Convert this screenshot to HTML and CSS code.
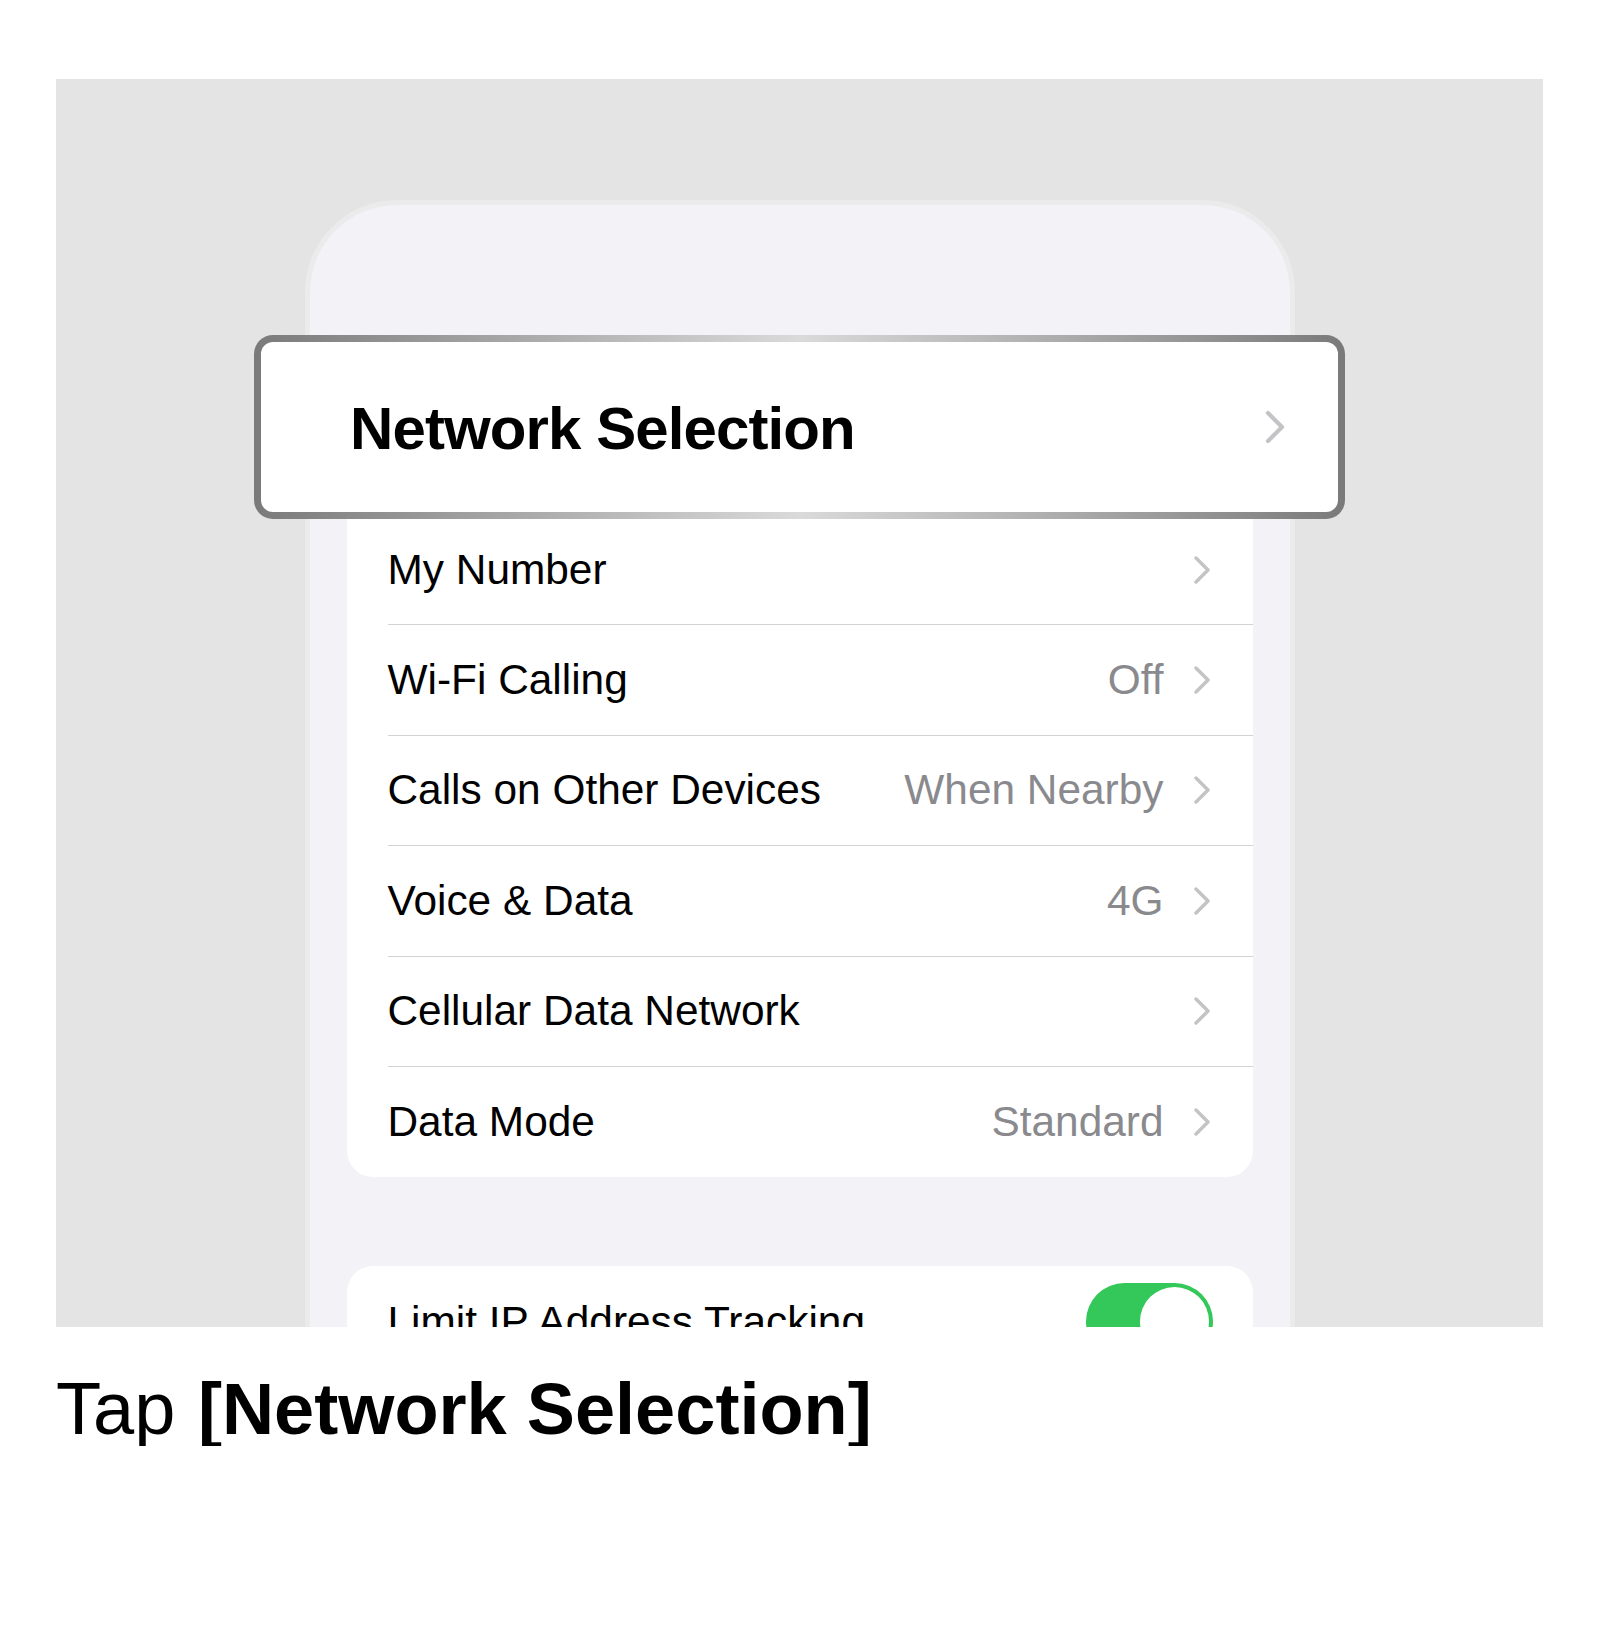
FILE: index.html
```html
<!DOCTYPE html>
<html lang="en">
    <head>
        <meta charset="UTF-8">
        <title>Tap Network Selection</title>
        <meta name="viewport" content="width=device-width, initial-scale=1.0"/>
        <link rel="stylesheet" href="styles.css">
    </head>

    <body>
        <div class="stage">
            <div class="phone">
                <div class="card card-first">
                    <div class="row">
                        <div class="row-inner">
                            <span class="label">My Number</span>
                            <span class="chevron"><svg width="16" height="28" viewBox="0 0 16 28"><path d="M2 2 L14 14 L2 26" fill="none" stroke="#c4c4c7" stroke-width="3.5" stroke-linecap="round" stroke-linejoin="round"/></svg></span>
                        </div>
                    </div>
                    <div class="row">
                        <div class="row-inner">
                            <span class="label">Wi-Fi Calling</span>
                            <span class="value">Off</span>
                            <span class="chevron"><svg width="16" height="28" viewBox="0 0 16 28"><path d="M2 2 L14 14 L2 26" fill="none" stroke="#c4c4c7" stroke-width="3.5" stroke-linecap="round" stroke-linejoin="round"/></svg></span>
                        </div>
                    </div>
                    <div class="row">
                        <div class="row-inner">
                            <span class="label">Calls on Other Devices</span>
                            <span class="value">When Nearby</span>
                            <span class="chevron"><svg width="16" height="28" viewBox="0 0 16 28"><path d="M2 2 L14 14 L2 26" fill="none" stroke="#c4c4c7" stroke-width="3.5" stroke-linecap="round" stroke-linejoin="round"/></svg></span>
                        </div>
                    </div>
                    <div class="row">
                        <div class="row-inner">
                            <span class="label">Voice &amp; Data</span>
                            <span class="value">4G</span>
                            <span class="chevron"><svg width="16" height="28" viewBox="0 0 16 28"><path d="M2 2 L14 14 L2 26" fill="none" stroke="#c4c4c7" stroke-width="3.5" stroke-linecap="round" stroke-linejoin="round"/></svg></span>
                        </div>
                    </div>
                    <div class="row">
                        <div class="row-inner">
                            <span class="label">Cellular Data Network</span>
                            <span class="chevron"><svg width="16" height="28" viewBox="0 0 16 28"><path d="M2 2 L14 14 L2 26" fill="none" stroke="#c4c4c7" stroke-width="3.5" stroke-linecap="round" stroke-linejoin="round"/></svg></span>
                        </div>
                    </div>
                    <div class="row last">
                        <div class="row-inner">
                            <span class="label">Data Mode</span>
                            <span class="value">Standard</span>
                            <span class="chevron"><svg width="16" height="28" viewBox="0 0 16 28"><path d="M2 2 L14 14 L2 26" fill="none" stroke="#c4c4c7" stroke-width="3.5" stroke-linecap="round" stroke-linejoin="round"/></svg></span>
                        </div>
                    </div>
                </div>

                <div class="card card-second">
                    <div class="row last">
                        <div class="row-inner">
                            <span class="label">Limit IP Address Tracking</span>
                            <span class="toggle"><span class="knob"></span></span>
                        </div>
                    </div>
                </div>
            </div>

            <!-- zoomed callout -->
            <div class="callout">
                <span class="callout-label">Network Selection</span>
                <svg width="20" height="34" viewBox="0 0 20 34"><path d="M3 3 L17 17 L3 31" fill="none" stroke="#c4c4c7" stroke-width="4.2" stroke-linecap="round" stroke-linejoin="round"/></svg>
            </div>
        </div>

        <p class="caption">Tap <b>[Network Selection]</b></p>
    </body>
</html>
```

FILE: styles.css
```css
body {
    margin: 0;
    background: #fff;
    font-family: "Liberation Sans", Arial, sans-serif;
    color: #000;
}

.stage {
    position: relative;
    margin: 79px 57px 0 56px;
    height: 1248px;
    background: #e4e4e4;
    overflow: hidden;
    display: flex;
    justify-content: center;
    padding-top: 121px;
    box-sizing: border-box;
}

.phone {
    width: 990px;
    box-sizing: border-box;
    border: 5px solid #ebebeb;
    border-bottom: none;
    border-radius: 92px 92px 0 0;
    background: #f2f2f7;
    padding: 275px 37px 0 37px;
    height: 1300px;
}

.card {
    background: #fff;
    border-radius: 26px;
}
.card-first {
    padding-top: 35px;
}
.card-second {
    margin-top: 89px;
}

.row {
    height: 110.4px;
    padding-left: 41px;
}
.row-inner {
    height: 100%;
    box-sizing: border-box;
    display: flex;
    align-items: center;
    padding-right: 43px;
    border-bottom: 1px solid #d1d1d6;
}
.row.last .row-inner {
    border-bottom: none;
}

.label {
    font-size: 42.4px;
    margin-right: auto;
}
.value {
    font-size: 42.4px;
    color: #8a8a8e;
    margin-right: 30px;
}
.chevron {
    display: flex;
}

.toggle {
    width: 127px;
    height: 77px;
    border-radius: 39px;
    background: #34c759;
    display: flex;
    justify-content: flex-end;
    align-items: center;
    padding: 4px;
    box-sizing: border-box;
    margin-right: -3px;
}
.knob {
    width: 69px;
    height: 69px;
    border-radius: 50%;
    background: #fff;
}

/*CALLOUT*/
.callout {
    position: absolute;
    left: 198px;
    top: 256px;
    width: 1091px;
    height: 184px;
    box-sizing: border-box;
    border: 7px solid transparent;
    border-radius: 19px;
    background: linear-gradient(#fff, #fff) padding-box,
        linear-gradient(90deg, #7a7a7a, #dadada 50%, #7a7a7a) border-box;
    display: flex;
    align-items: center;
    padding: 0 53px 0 89px;
}
.callout-label {
    font-size: 60px;
    font-weight: 700;
    letter-spacing: -0.9px;
    margin-right: auto;
    margin-top: 3px;
}
/*CALLOUT*/

.caption {
    margin: 45px 0 0 56px;
    font-size: 74px;
    line-height: 1;
    word-spacing: 2px;
}
.caption b {
    font-weight: 700;
    font-size: 72.2px;
    word-spacing: 0;
}
```
